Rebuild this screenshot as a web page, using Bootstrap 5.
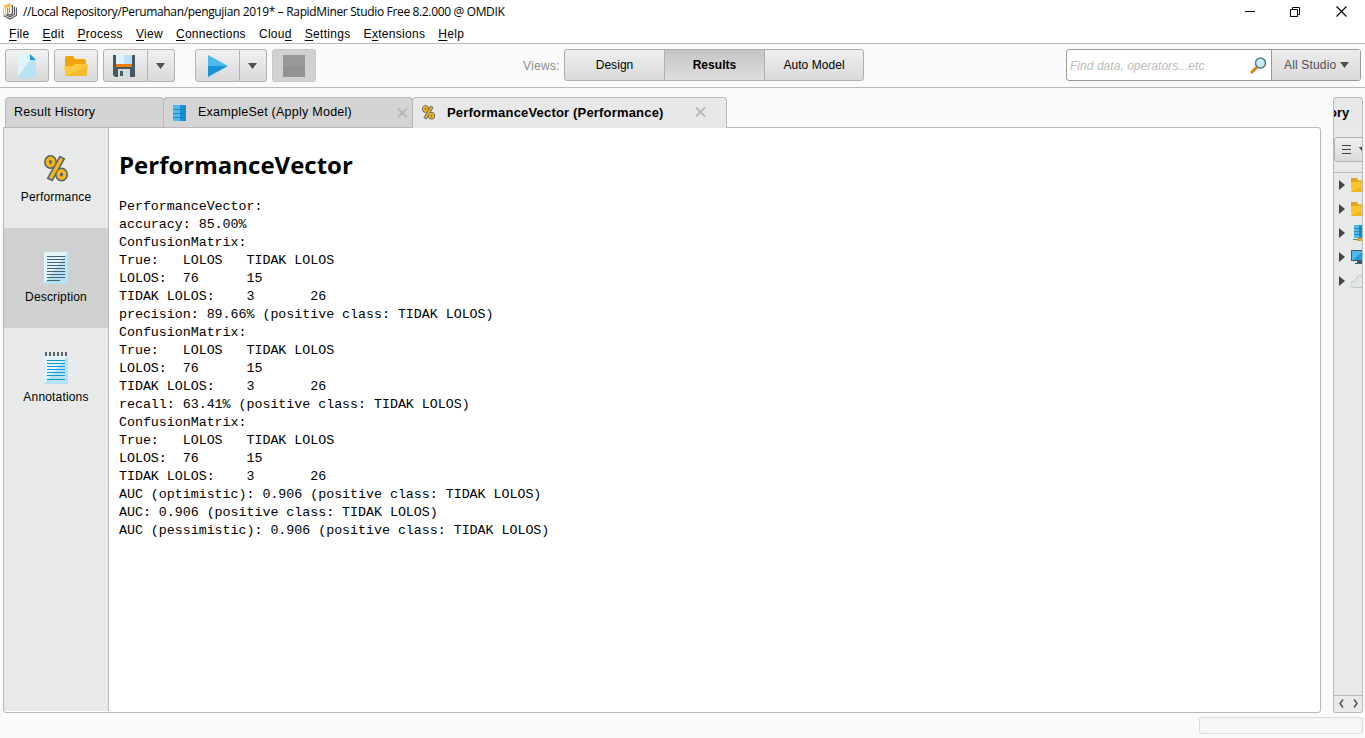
<!DOCTYPE html>
<html lang="en">
<head>
<meta charset="utf-8">
<title>RapidMiner Studio</title>
<link rel="stylesheet" href="https://cdn.jsdelivr.net/npm/bootstrap@5.3.0/dist/css/bootstrap.min.css">
<style>
body{width:1365px;height:738px;overflow:hidden;background:#fafafa;color:#000;font:12px/16px "Liberation Sans",Arial,sans-serif}
svg{display:block;flex:none}
.title-bar{height:24px;background:#fff;font:12px/16px "Open Sans",sans-serif;padding:0 18px 2px 2px}
.title-text{letter-spacing:-.35px;margin:2px 0 0 5px}
.win{gap:35px}
.menu{height:20px;background:#fff;border-bottom:1px solid #b9b9b9;padding:2px 9px 0;gap:13px;letter-spacing:.3px}
.menu u{text-underline-offset:2px}
.tools{height:44px;border-bottom:1px solid #b9b9b9;padding:5px 4px 0 5px}
.tool{height:33px;width:44px;padding:0;border:1px solid #b3b3b3;border-radius:3px;background:linear-gradient(#f1f1f1,#d9d9d9);display:flex;align-items:center;justify-content:center}
.tool.off{background:#d1d1d1;border-color:#c8c8c8}
.tool.main-part{width:45px}
.tool.drop{width:27px;padding-right:1px}
.tool-pair{display:flex}
.tool-pair .tool:first-child{border-radius:3px 0 0 3px}
.tool-pair .tool:last-child{border-radius:0 3px 3px 0;border-left:0}
.views-label{color:#8c8c8c;letter-spacing:.3px;width:41px;margin-left:207px;padding-top:9px}
.views{width:300px;height:32px;border:1px solid #b0b0b0;border-radius:3px;background:linear-gradient(#efefef,#d9d9d9)}
.views>div{width:99px;text-align:center;line-height:30px;letter-spacing:.05px}
.views>div+div{border-left:1px solid #b0b0b0;width:100px}
.views>div:last-child{flex:1}
.views .current{background:linear-gradient(#c5c5c5,#dedede);font-weight:bold}
.find{width:295px;height:32px;border:1px solid #999;border-radius:3px;background:#fff}
.find-text{color:#bcbcbc;font-style:italic;letter-spacing:.04px;padding:1px 0 0 3px}
.scope{width:89px;height:30px;border-left:1px solid #999;background:linear-gradient(#ececec,#dadada);color:#505050;padding-left:12px;line-height:29px;letter-spacing:.17px}
.workspace{height:616px;margin-top:9px;padding-left:3px}
.results{width:1318px}
.tab{height:30px;border:1px solid #b9b9b9;border-bottom:0;border-radius:4px 4px 0 0;background:#d4d4d4;line-height:29px;font-size:12.5px;letter-spacing:.25px}
.tab.front{height:31px;background:#e8e8e8;font-weight:bold;font-size:13px;letter-spacing:.18px;position:relative}
.tab-strip{height:30px;padding-left:2px}
.pane{height:586px;border:1px solid #b9b9b9;border-radius:0 3px 3px 3px;background:#fff}
.side{width:105px;background:#e8eae9;border-right:1px solid #b9b9b9;margin-bottom:1px}
.side>div{height:100px;padding-top:24px;letter-spacing:.17px}
.side>div.current{background:#cfd1d0}
.side span{margin-top:5px}
.report{padding:19px 0 0 10px}
.report h1{font:bold 24px/36px "Open Sans",sans-serif;margin:0}
.report pre{font:13.33px/18px "Liberation Mono",monospace;margin:15px 0 0;overflow:visible;color:#000;letter-spacing:-.03px}
.repo{width:30px;margin-left:12px}
.repo-tab{height:30px;border:1px solid #b9b9b9;border-bottom:0;border-radius:4px 4px 0 0;background:#e8e8e8;font-weight:bold;font-size:13px;line-height:30px;overflow:hidden}
.repo-tab span{margin-left:-5px;display:block}
.repo-body{height:586px;border:1px solid #b9b9b9;border-top:0;border-radius:0 0 3px 3px;background:#e8eae9;overflow:hidden}
.repo-tools{height:46px;border-bottom:1px solid #b9b9b9;padding-top:10px}
.repo-tools>div{width:40px;height:25px;border:1px solid #b3b3b3;border-radius:3px;background:linear-gradient(#f1f1f1,#d9d9d9);padding-left:7px;gap:7px}
.repo-item{height:24px;gap:6px;padding-left:5px}
.repo-scroll{height:17px;border-top:1px solid #b9b9b9;padding:0 0 1px 5px;gap:9px}
.progress-box{width:164px;height:17px;border:1px solid #dcdcdc;border-radius:3px;background:#f6f6f6;margin:4px 2px 0 auto}
</style>
</head>
<body>
<svg width="0" height="0" class="position-absolute">
<defs>
<symbol id="arrow" viewBox="0 0 9 6"><path d="M0 0h9L4.500 6z" fill="#505050"/></symbol>
<symbol id="cross" viewBox="0 0 10 10"><path d="M.5.5l9 9M9.500.5l-9 9" stroke="#b5b5b5" stroke-width="1.800"/></symbol>
<symbol id="twist" viewBox="0 0 6 10"><path d="M0 0l6 5-6 5z" fill="#454545"/></symbol>
<symbol id="percent" viewBox="0 0 24 27"><g fill="none" stroke="#4f666e" stroke-width="6.600"><ellipse cx="6.500" cy="7" rx="3.200" ry="3.700"/><ellipse cx="17.500" cy="19.500" rx="3.200" ry="3.700"/><path d="M5.500 25L18.500 2"/></g><g fill="none" stroke="#f5b31c" stroke-width="3.400"><path d="M6.300 23.600L17.700 3.400"/><ellipse cx="6.500" cy="7" rx="3.200" ry="3.700"/><ellipse cx="17.500" cy="19.500" rx="3.200" ry="3.700"/></g></symbol>
<symbol id="folder" viewBox="0 0 24 20"><path d="M1 2q0-2 2-2h6l2 3h9q2 0 2 2v13H1z" fill="#f0a30a"/><path d="M0 10h8l3-2h13l-1.500 12h-21z" fill="#fbc840"/><path d="M1.500 20L23.500 10l-1 10z" fill="#f5b92c"/></symbol>
<symbol id="folder2" viewBox="0 0 17 14"><path d="M0 1h6l1 2h10v11H0z" fill="#fbc530"/><path d="M0 0h6l1.500 2.500H17V4H0z" fill="#e9a115"/><path d="M0 14L17 5v9z" fill="#f3b323"/></symbol>
</defs>
</svg>

<header class="title-bar d-flex align-items-center">
<svg width="16" height="17" viewBox="0 0 16 17" fill="none" stroke-width="1.200"><path d="M1.600 4.800v7M3.600 4v7" stroke="#ffd21f"/><path d="M2 3.600l6-2.800M4 4.500l4-2 2 1" stroke="#f9a51b"/><path d="M5.600 5v6.500M7.500 4.500v5" stroke="#ef7622"/><path d="M1.600 12.500L8 16l6.400-3.500v-8M3.600 11.500L8 13.800l4.400-2.300V3.500M5.600 11L8 12l2.400-1.300V2" stroke="#5a5a5a"/></svg>
<span class="title-text">//Local Repository/Perumahan/pengujian 2019* – RapidMiner Studio Free 8.2.000 @ OMDIK</span>
<div class="win d-flex ms-auto align-items-center">
<svg width="10" height="11"><path d="M0 5.500h10" stroke="#000"/></svg>
<svg width="11" height="11" fill="none" stroke="#000"><path d="M.5 3.500h7v7h-7zM2.500 3V1.500h7v7H8"/></svg>
<svg width="11" height="11"><path d="M.5.5l10 10M10.500.5l-10 10" stroke="#000" stroke-width="1.200"/></svg>
</div>
</header>
<nav class="menu d-flex"><span><u>F</u>ile</span><span><u>E</u>dit</span><span><u>P</u>rocess</span><span><u>V</u>iew</span><span><u>C</u>onnections</span><span>Clou<u>d</u></span><span><u>S</u>ettings</span><span>E<u>x</u>tensions</span><span><u>H</u>elp</span></nav>

<div class="tools d-flex">
<div class="tool"><svg width="18" height="24"><path d="M0 0h12l6 6v18H0z" fill="#b8e3f5"/><path d="M0 0h12l2 3L0 23z" fill="#e1f3fb"/><path d="M12 0l6 6h-6z" fill="#1b9bd7"/></svg></div>
<div class="tool" style="margin-left:5px"><svg width="24" height="20"><use href="#folder"/></svg></div>
<div class="tool-pair" style="margin-left:5px">
<div class="tool main-part"><svg width="22" height="22" class="me-1"><path d="M0 0h22v22H2l-2-2z" fill="#465a64"/><path d="M3 0h16v9H3z" fill="#dff3fb"/><path d="M11 0h8v9h-8z" fill="#b9e3f5"/><path d="M3 9h16v3H3z" fill="#ef7d0b"/><path d="M5 14h12v8H5z" fill="#d5dadc"/><path d="M7 16h3v5H7z" fill="#465a64"/></svg></div>
<div class="tool drop"><svg width="9" height="6"><use href="#arrow"/></svg></div></div>
<div class="tool-pair" style="margin-left:20px">
<div class="tool main-part"><svg width="20" height="22"><path d="M0 0l20 11H0z" fill="#4dbaeb"/><path d="M0 22l20-11H0z" fill="#1696d8"/></svg></div>
<div class="tool drop"><svg width="9" height="6"><use href="#arrow"/></svg></div></div>
<div class="tool off" style="margin-left:5px"><svg width="22" height="22"><path d="M0 0h22v22H0z" fill="#999"/><path d="M0 11h22v11H0z" fill="#929292"/></svg></div>
<div class="views-label">Views:</div>
<div class="views d-flex"><div>Design</div><div class="current">Results</div><div>Auto Model</div></div>
<div class="find d-flex ms-auto align-items-center"><span class="find-text">Find data, operators...etc</span>
<svg width="17" height="17" class="ms-auto" style="margin-right:4px"><path d="M1 16l6-6" stroke="#d98213" stroke-width="3"/><circle cx="10.500" cy="6" r="5" fill="#c5eafa" stroke="#557685" stroke-width="1.500"/></svg>
<div class="scope d-flex align-items-center">All Studio<svg width="9" height="6" style="margin-left:4px"><use href="#arrow"/></svg></div></div>
</div>

<main class="workspace d-flex">
<section class="results">
<div class="tab-strip d-flex">
<div class="tab" style="width:159px;padding-left:8px;margin-right:-1px">Result History</div>
<div class="tab d-flex align-items-center" style="width:250px;padding:0 4px 0 9px;margin-right:-1px"><svg width="13" height="16"><path d="M0 0h7v16H0z" fill="#4dbaeb"/><path d="M7 0h6v16H7z" fill="#1490d3"/><path d="M0 4.500h13M0 8.500h13M0 12.500h13" stroke="#1579b0" stroke-opacity=".7"/></svg><span style="margin-left:12px">ExampleSet (Apply Model)</span><svg width="11" height="10" class="ms-auto"><use href="#cross"/></svg></div>
<div class="tab front d-flex align-items-center" style="width:315px;padding:0 20px 2px 9px"><svg width="13" height="15"><use href="#percent"/></svg><span style="margin-left:12px">PerformanceVector (Performance)</span><svg width="11" height="10" class="ms-auto"><use href="#cross"/></svg></div>
</div>
<div class="pane d-flex">
<aside class="side">
<div class="d-flex flex-column align-items-center"><svg width="24" height="32" style="padding:3px 0 2px"><use href="#percent"/></svg><span>Performance</span></div>
<div class="current d-flex flex-column align-items-center"><svg width="24" height="32"><path d="M0 0h24v32H0z" fill="#b6e2f5"/><path d="M0 0h24L0 32z" fill="#e1f3fb"/><path d="M3 4.500h18M3 7.500h18M3 10.500h18M3 13.500h18M3 16.500h18M3 19.500h18M3 22.500h18M3 25.500h18M3 28.500h13" stroke="#49616d"/></svg><span>Description</span></div>
<div class="d-flex flex-column align-items-center"><svg width="24" height="32"><path d="M0 4h24v28H0z" fill="#b6e2f5"/><path d="M0 4h24L0 32z" fill="#e1f3fb"/><path d="M3 8.500h18M3 11.500h18M3 14.500h18M3 17.500h18M3 20.500h18M3 23.500h18M3 27.500h18" stroke="#129bd9"/><path d="M1 2h22" stroke="#59666c" stroke-width="4" stroke-dasharray="2 2"/></svg><span>Annotations</span></div>
</aside>
<article class="report"><h1>PerformanceVector</h1>
<pre>PerformanceVector:
accuracy: 85.00%
ConfusionMatrix:
True:	LOLOS	TIDAK LOLOS
LOLOS:	76	15
TIDAK LOLOS:	3	26
precision: 89.66% (positive class: TIDAK LOLOS)
ConfusionMatrix:
True:	LOLOS	TIDAK LOLOS
LOLOS:	76	15
TIDAK LOLOS:	3	26
recall: 63.41% (positive class: TIDAK LOLOS)
ConfusionMatrix:
True:	LOLOS	TIDAK LOLOS
LOLOS:	76	15
TIDAK LOLOS:	3	26
AUC (optimistic): 0.906 (positive class: TIDAK LOLOS)
AUC: 0.906 (positive class: TIDAK LOLOS)
AUC (pessimistic): 0.906 (positive class: TIDAK LOLOS)</pre></article>
</div>
</section>
<aside class="repo">
<div class="repo-tab"><span>ory</span></div>
<div class="repo-body d-flex flex-column">
<div class="repo-tools"><div class="d-flex align-items-center"><svg width="9" height="9"><path d="M0 .5h9M0 4.500h9M0 8.500h9" stroke="#444"/></svg><svg width="9" height="5"><use href="#arrow"/></svg></div></div>
<div class="repo-item d-flex align-items-center"><svg width="6" height="10"><use href="#twist"/></svg><svg width="17" height="14"><use href="#folder2"/></svg></div>
<div class="repo-item d-flex align-items-center"><svg width="6" height="10"><use href="#twist"/></svg><svg width="17" height="14"><use href="#folder2"/></svg></div>
<div class="repo-item d-flex align-items-center"><svg width="6" height="10"><use href="#twist"/></svg><svg width="17" height="16"><path d="M3 0h5v13H3z" fill="#4dbaeb"/><path d="M8 0h7v13H8z" fill="#1490d3"/><path d="M3 3.500h12M3 6.500h12M3 9.500h12" stroke="#1579b0" stroke-opacity=".7"/><path d="M2 14.500h14" stroke="#6c7a80"/><path d="M6 13h5v3H6z" fill="#e9a115"/></svg></div>
<div class="repo-item d-flex align-items-center"><svg width="6" height="10"><use href="#twist"/></svg><svg width="17" height="14"><path d="M0 0h17v11H0z" fill="#465a64"/><path d="M1 1h16v9H1z" fill="#1c9bdd"/><path d="M1 1h11L2 10H1z" fill="#4dbaeb"/><path d="M6 11h5v2h3v1H4v-1h2z" fill="#465a64"/></svg></div>
<div class="repo-item d-flex align-items-center"><svg width="6" height="10"><use href="#twist"/></svg><svg width="17" height="13"><path d="M3 12.500A3.200 3.200 0 013 6Q4.500 5.500 5 4a4.500 4.500 0 018-2l4 4v6.500z" fill="#e2e5e7" stroke="#bcc2c5"/></svg></div>
<div class="repo-scroll d-flex align-items-center mt-auto"><svg width="5" height="9"><path d="M4 .5L1 4.500l3 4" fill="none" stroke="#555" stroke-width="1.500"/></svg><svg width="5" height="9"><path d="M1 .5l3 4-3 4" fill="none" stroke="#555" stroke-width="1.500"/></svg></div>
</div>
</aside>
</main>
<div class="progress-box"></div>
<script src="https://cdn.jsdelivr.net/npm/bootstrap@5.3.0/dist/js/bootstrap.bundle.min.js"></script>
</body>
</html>
